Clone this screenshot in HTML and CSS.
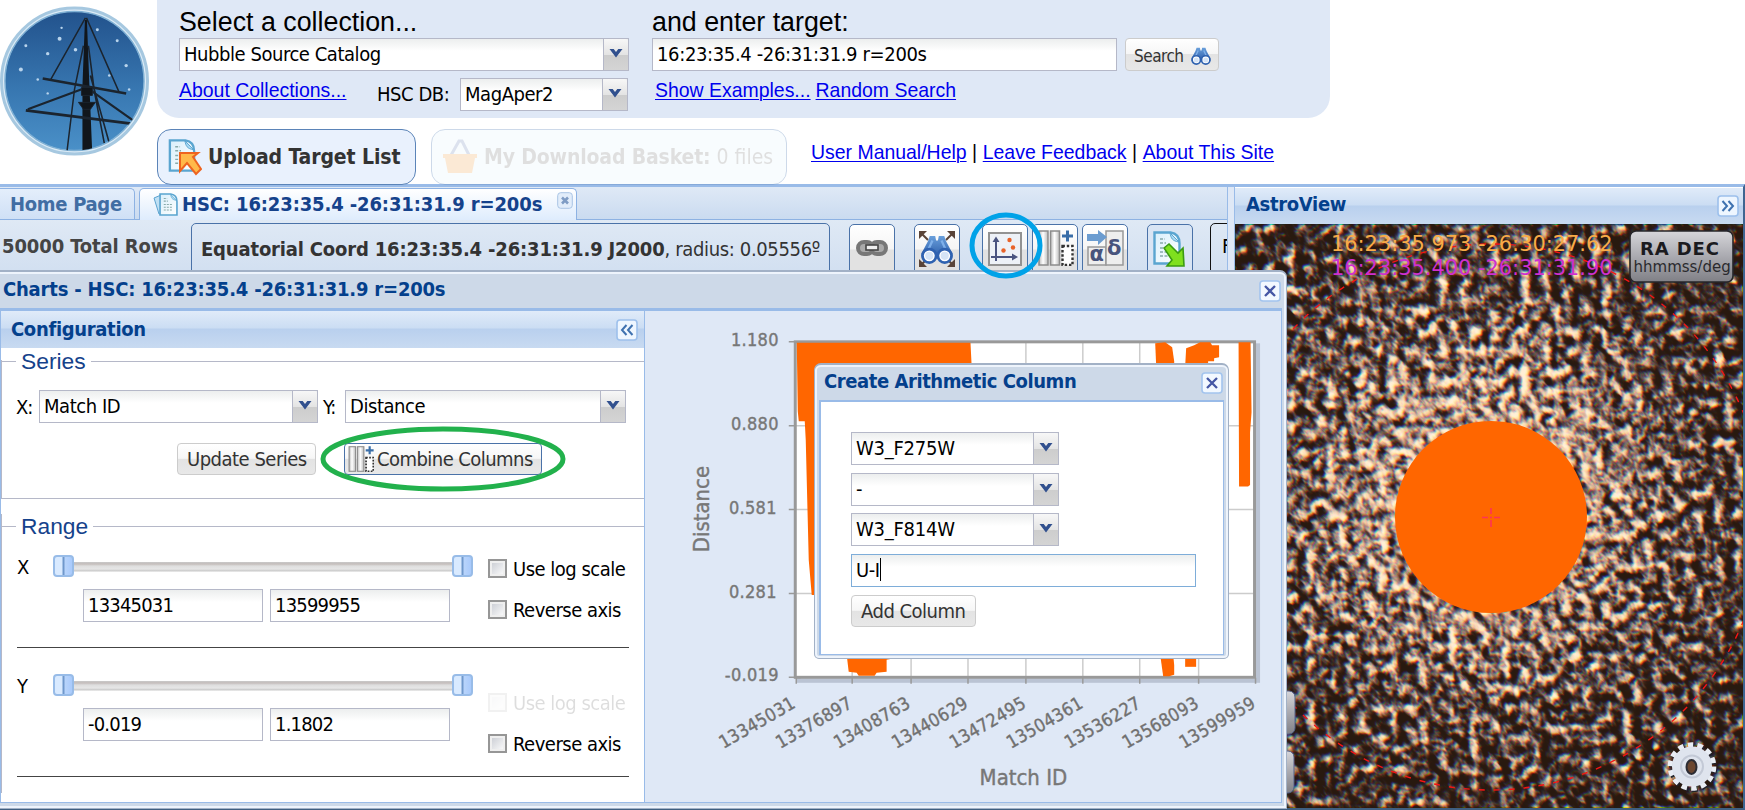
FILE: index.html
```html
<!DOCTYPE html>
<html lang="en">
<head>
<meta charset="utf-8">
<title>MAST Discovery Portal</title>
<link rel="stylesheet" href="styles.css">
</head>
<body>
<svg class="defs" width="0" height="0">
  <defs>
    <linearGradient id="steel" x1="0" y1="0" x2="1" y2="0"><stop offset="0" stop-color="#bbb"/><stop offset=".45" stop-color="#fff"/><stop offset="1" stop-color="#bbb"/></linearGradient>
    <linearGradient id="paper" x1="0" y1="0" x2="1" y2="1"><stop offset="0" stop-color="#d9effb"/><stop offset="1" stop-color="#fff"/></linearGradient>
    <linearGradient id="binoBlue" x1="0" y1="0" x2="0" y2="1"><stop offset="0" stop-color="#6aa0dc"/><stop offset="1" stop-color="#2a5ba8"/></linearGradient>
    <symbol id="chevron" viewBox="0 0 14 10"><path d="M0.5 1h4.2L7 4l2.3-3h4.2L7 9.5z" fill="#31508e"/></symbol>
    <symbol id="cross" viewBox="0 0 22 22"><rect x="1" y="1" width="20" height="20" rx="3" fill="#f2f8ff" stroke="#a3c4ee" stroke-width="1.6"/><path d="M6 6l10 10M16 6L6 16" stroke="#4456a4" stroke-width="2.3"/></symbol>
    <symbol id="fold" viewBox="0 0 22 22"><rect x="1" y="1" width="20" height="20" rx="3" fill="#eef6ff" stroke="#9dc0ec" stroke-width="1.6"/><path d="M10.5 6L6 11l4.500 5M16.500 6L12 11l4.500 5" fill="none" stroke="#3f72b0" stroke-width="2"/></symbol>
    <symbol id="columns" viewBox="0 0 36 36">
      <rect x="1.500" y="1" width="9" height="34" fill="url(#steel)" stroke="#8c8c8c" stroke-width="1.500"/>
      <rect x="13" y="1" width="9" height="34" fill="url(#steel)" stroke="#8c8c8c" stroke-width="1.500"/>
      <path d="M30 .5v11M24.500 6h11" stroke="#3a6ea8" stroke-width="3"/>
      <rect x="25" y="16" width="10" height="19" fill="#fff" stroke="#333" stroke-width="2.400" stroke-dasharray="2.400 1.900"/>
    </symbol>
    <symbol id="binoculars" viewBox="0 0 36 32">
      <path d="M10 1h6l1 5h2l1-5h6l2 6 7 13v5H1v-5L8 7z" fill="url(#binoBlue)"/>
      <path d="M13 6l-5 11M23 6l5 11" stroke="#7fb0ea" stroke-width="2.500"/>
      <circle cx="9.500" cy="23" r="7.500" fill="#fff" stroke="#2f62b0" stroke-width="3"/>
      <circle cx="26.500" cy="23" r="7.500" fill="#fff" stroke="#2f62b0" stroke-width="3"/>
      <circle cx="9.500" cy="23" r="4.500" fill="#d5e4f6"/><circle cx="26.500" cy="23" r="4.500" fill="#d5e4f6"/>
    </symbol>
    <symbol id="page" viewBox="0 0 28 34">
      <path d="M1.500 1.500h16c7 1 9 6 9 11v20h-25z" fill="url(#paper)" stroke="#5aa5d0" stroke-width="2.400"/>
      <path d="M17 2c1 5 2 8 9 9z" fill="#a9d9f2" stroke="#5aa5d0"/>
      <path d="M7 8h5M7 12h6M7 17h13M7 21h13M7 25h13" stroke="#8aa" stroke-width="1.500" stroke-dasharray="3 1.500"/>
    </symbol>
  </defs>
</svg>

<header class="masthead">
  <svg class="logo" width="149" height="150" viewBox="0 0 150 151">
    <defs>
      <linearGradient id="sky" x1="0" y1="0" x2="0" y2="1"><stop offset="0" stop-color="#22528c"/><stop offset=".55" stop-color="#3776b0"/><stop offset="1" stop-color="#4a90c8"/></linearGradient>
      <clipPath id="disc"><circle cx="75" cy="75.500" r="70"/></clipPath>
    </defs>
    <circle cx="75" cy="75.500" r="73.500" fill="#dcebf6" stroke="#a6c8e0" stroke-width="3"/>
    <circle cx="75" cy="75.500" r="70" fill="url(#sky)" stroke="#7fb0d4" stroke-width="1.500"/>
    <g fill="#b9d4ec"><circle cx="60" cy="33" r="2"/><circle cx="76" cy="44" r="1.800"/><circle cx="48" cy="48" r="1.700"/><circle cx="26" cy="40" r="1.500"/><circle cx="21" cy="64" r="2"/><circle cx="38" cy="74" r="1.300"/><circle cx="98" cy="24" r="1.500"/><circle cx="118" cy="35" r="1.500"/><circle cx="127" cy="60" r="1.700"/><circle cx="110" cy="70" r="1.300"/><circle cx="48" cy="88" r="1.200"/><circle cx="62" cy="22" r="1.200"/><circle cx="130" cy="84" r="1.300"/></g>
    <g clip-path="url(#disc)" fill="none" stroke="#1b242e">
      <path d="M83 151V80l2.500-66h2L90 80l3 71z" fill="#11161b" stroke="none"/>
      <path d="M86 12L51 74M87 12l33 75M84 40L75 84 67 150" stroke-width="1.500"/>
      <path d="M89 40l6 46 10 52M91 70l19 68" stroke-width="1.600"/>
      <path d="M43 73l84 15" stroke-width="2.600"/><path d="M26 105l110 14" stroke-width="2.800"/>
      <path d="M87 82L28 104M87 82l48 34" stroke-width="2.200"/>
      <path d="M79 97h17l-5 7h-7zM82 82h11v8H82z" fill="#11161b" stroke-width="1"/>
    </g>
  </svg>
  <div class="masthead-main">
    <div class="search-panel">
      <div class="collection">
        <div class="lead">Select a collection...</div>
        <div class="combo wide"><span>Hubble Source Catalog</span><i><svg><use href="#chevron"/></svg></i></div>
        <div class="subrow">
          <a href="#">About Collections...</a>
          <label>HSC DB:</label>
          <div class="combo db"><span>MagAper2</span><i><svg><use href="#chevron"/></svg></i></div>
        </div>
      </div>
      <div class="target">
        <div class="lead">and enter target:</div>
        <div class="target-row">
          <div class="field"><span class="coord-text">16:23:35.4 -26:31:31.9 r=200s</span></div>
          <button class="btn search">Search <svg width="20" height="18"><use href="#binoculars"/></svg></button>
        </div>
        <div class="links"><a href="#">Show Examples...</a><a href="#">Random Search</a></div>
      </div>
    </div>
    <div class="actions">
      <div class="pill">
        <svg width="34" height="38" viewBox="0 0 34 38"><use href="#page" x="0" y="1" width="28" height="33"/><path d="M12 15h18l-5 4L33 31l-5 5-9-11-7 8z" fill="#ffb94a" stroke="#ee6420" stroke-width="2"/></svg>
        <b>Upload Target List</b>
      </div>
      <div class="pill basket">
        <svg width="36" height="36" viewBox="0 0 36 36"><path d="M8 18L17 2l3 0 8 16" fill="none" stroke="#8da0c8" stroke-width="3"/><path d="M1 15h34v4h-2l-3 15H6L3 19H1z" fill="#f2b878"/></svg>
        <span><b>My Download Basket:</b> 0 files</span>
      </div>
      <nav><a href="#">User Manual/Help</a> | <a href="#">Leave Feedback</a> | <a href="#">About This Site</a></nav>
    </div>
  </div>
</header>

<main class="workspace">
  <section class="results">
    <div class="tabs">
      <div class="tab">Home Page</div>
      <div class="tab active">
        <svg width="25" height="25" viewBox="0 0 25 25"><path d="M1 6l7-3 3 18-5 1z" fill="#bfe0f4" stroke="#5ba3d0"/><use href="#page" x="6" y="1" width="19" height="23"/></svg>
        <b>HSC: 16:23:35.4 -26:31:31.9 r=200s</b>
        <svg class="tab-x" width="16" height="17" viewBox="0 0 16 17"><rect x=".7" y=".7" width="14.600" height="15.600" rx="3" fill="#e2edfa" stroke="#a9c4e4"/><path d="M5 5.500l6 6M11 5.500l-6 6" stroke="#7f9cc4" stroke-width="2.600"/></svg>
      </div>
    </div>
    <div class="toolbar">
      <b class="total">50000 Total Rows</b>
      <div class="query"><b>Equatorial Coord 16:23:35.4 -26:31:31.9 J2000</b><span>, radius: 0.05556º</span></div>
      <div class="tool t-link"><svg width="34" height="18" viewBox="0 0 34 18"><rect x="3" y="3" width="15" height="12" rx="6" fill="#aaa" stroke="#777" stroke-width="4"/><rect x="16" y="3" width="15" height="12" rx="6" fill="#aaa" stroke="#777" stroke-width="4"/><rect x="11" y="6" width="12" height="5" fill="#eee" stroke="#444" stroke-width="1.600"/></svg></div>
      <div class="tool t-bino"><svg width="38" height="38" viewBox="0 0 38 38"><path d="M2 2l8 8M36 2l-8 8M2 36l8-8M36 36l-8-8" stroke="#5a4438" stroke-width="2"/><path d="M1 1h8L1 9zM37 1h-8l8 8zM1 37h8l-8-8zM37 37h-8l8-8z" fill="#5a4438"/><use href="#binoculars" x="2" y="5" width="34" height="29"/></svg></div>
      <div class="tool t-plot"><svg width="34" height="34" viewBox="0 0 34 34"><rect x="1" y="1" width="32" height="32" fill="#edf1f7" stroke="#929292" stroke-width="2"/><path d="M8 29V7M3 25h25" stroke="#4a5480" stroke-width="2"/><path d="M4.500 10L8 4.500l3.500 5.500zM24 21.500l6 3.500-6 3.500z" fill="#4a5480"/><g fill="#e8632a"><circle cx="21.500" cy="8" r="2.200"/><circle cx="25" cy="15.500" r="2.200"/><circle cx="15.500" cy="18.500" r="2.200"/></g></svg></div>
      <div class="tool t-cols"><svg width="37" height="36"><use href="#columns"/></svg></div>
      <div class="tool t-alpha"><svg width="37" height="36" viewBox="0 0 37 36"><rect x="1" y="17" width="18" height="18" fill="#eee" stroke="#999" stroke-width="1.500"/><rect x="19" y="1" width="17" height="34" fill="#eee" stroke="#999" stroke-width="1.500"/><path d="M0 4h11V0l9 7-9 8v-4H0z" fill="#6b9cd0"/><text class="greek" x="2.500" y="31">α</text><text class="greek" x="20" y="25">δ</text></svg></div>
      <div class="tool t-export"><svg width="34" height="38" viewBox="0 0 34 38"><use href="#page" x="0" y="1" width="28" height="34"/><path d="M11 18l5-4 9 9 5-5 1 18H14l5-6z" fill="#7fe01e" stroke="#3a9a12" stroke-width="1.600"/></svg></div>
      <div class="filter">F</div>
    </div>
  </section>
  <div class="splitter"></div>
  <aside class="astroview">
    <div class="panel-head"><b>AstroView</b><svg class="flip" width="22" height="22"><use href="#fold"/></svg></div>
    <svg class="sky" width="508" height="584" viewBox="1235 224 508 584">
      <defs>
        <radialGradient id="cluster" gradientUnits="userSpaceOnUse" cx="1480" cy="500" r="340"><stop offset="0" stop-color="#fff"/><stop offset=".3" stop-color="#e2e2e2"/><stop offset=".6" stop-color="#7a7a7a"/><stop offset="1" stop-color="#2c2c2c"/></radialGradient>
        <filter id="stars" filterUnits="userSpaceOnUse" x="1235" y="224" width="508" height="584" color-interpolation-filters="sRGB">
          <feTurbulence type="fractalNoise" baseFrequency="0.098" numOctaves="3" seed="23"/>
          <feColorMatrix values=".65 .5 0 0 -.07  .65 .5 0 0 -.07  .65 .5 0 0 -.07  0 0 0 0 1" result="n0"/>
          <feGaussianBlur in="n0" stdDeviation=".7" result="n"/>
          <feComposite in="n" in2="SourceGraphic" operator="arithmetic" k1="0" k2="2.050" k3="0.480" k4="-0.920" result="v"/>
          <feColorMatrix in="v" values="1 0 0 0 0  0 0 0 0 0  0 0 0 0 0  0 0 0 1 0" result="r0"/>
          <feOffset in="r0" dx="0.700" dy="0.700" result="r"/>
          <feColorMatrix in="v" values="0 0 0 0 0  0 1 0 0 0  0 0 0 0 0  0 0 0 1 0" result="g"/>
          <feColorMatrix in="v" values="0 0 0 0 0  0 0 0 0 0  0 0 1 0 0  0 0 0 1 0" result="b0"/>
          <feOffset in="b0" dx="-1" dy="-1" result="b"/>
          <feBlend in="r" in2="g" mode="screen" result="rg"/>
          <feBlend in="rg" in2="b" mode="screen"/>
          <feComponentTransfer>
            <feFuncR type="table" tableValues=".16 .17 .25 .42 .64 .85 .97 1 1"/>
            <feFuncG type="table" tableValues=".1 .11 .18 .33 .52 .7 .83 .9 .94"/>
            <feFuncB type="table" tableValues=".06 .08 .16 .31 .48 .6 .7 .78 .84"/>
          </feComponentTransfer>
        </filter>
      </defs>
      <rect x="1235" y="224" width="508" height="584" fill="url(#cluster)" filter="url(#stars)"/>
      <circle cx="1491" cy="517" r="273" fill="none" stroke="#f41414" stroke-width="1.400" stroke-dasharray="6 9"/>
      <circle cx="1491" cy="517" r="96" fill="#ff6600"/>
      <path d="M1482 517.500h6M1490 517.500h2M1494 517.500h6M1491 508v6M1491 520v7" stroke="#ff3355" stroke-width="1.600"/>
      <text class="pos" x="1331" y="251" fill="#f8ab48">16:23:35.973 -26:30:27.62</text>
      <text class="pos" x="1331" y="275" fill="#cf30cf">16:23:35.400 -26:31:31.90</text>
      <linearGradient id="metal" x1="0" y1="0" x2="0" y2="1"><stop offset="0" stop-color="#d6d6da"/><stop offset=".5" stop-color="#aaaab0"/><stop offset="1" stop-color="#808086"/></linearGradient>
      <rect x="1630" y="231" width="103" height="51" rx="6" fill="url(#metal)" stroke="#26262a" stroke-width="1.600"/>
      <text class="radec" x="1640" y="255">RA DEC</text>
      <text class="unit" x="1633.500" y="272">hhmmss/deg</text>
      <rect x="1270" y="691" width="25" height="43" rx="6" fill="url(#metal)" stroke="#53618a"/>
      <rect x="1270" y="751" width="24" height="42" rx="6" fill="url(#metal)" stroke="#53618a"/>
      <circle cx="1693" cy="768" r="21" fill="none" stroke="#23232b" stroke-width="6" stroke-dasharray="5.200 4.220"/>
      <circle cx="1692" cy="766.500" r="21.800" fill="none" stroke="#e9edf4" stroke-width="5" stroke-dasharray="5.500 4.280"/>
      <circle cx="1692" cy="766.500" r="12.500" fill="none" stroke="#dfe4ee" stroke-width="15"/>
      <circle cx="1692" cy="766.500" r="11" fill="none" stroke="#c3c9d6" stroke-width="2"/>
      <ellipse cx="1691.500" cy="767" rx="5" ry="7" fill="#6b4630" stroke="#2c2c34" stroke-width="2"/>
    </svg>
  </aside>
</main>

<section class="window charts">
  <div class="window-head"><b>Charts - HSC: 16:23:35.4 -26:31:31.9 r=200s</b><svg width="22" height="22"><use href="#cross"/></svg></div>
  <div class="window-body">
    <div class="config">
      <div class="panel-head"><b>Configuration</b><svg width="22" height="22"><use href="#fold"/></svg></div>
      <div class="group series">
        <div class="legend"><span>Series</span></div>
        <div class="axes">
          <label>X:</label><div class="combo sx"><span>Match ID</span><i><svg><use href="#chevron"/></svg></i></div>
          <label>Y:</label><div class="combo sy"><span>Distance</span><i><svg><use href="#chevron"/></svg></i></div>
        </div>
        <div class="series-buttons">
          <button class="btn update">Update Series</button>
          <button class="btn combine"><svg width="26" height="26"><use href="#columns"/></svg>Combine Columns</button>
        </div>
      </div>
      <div class="group range">
        <div class="legend"><span>Range</span></div>
        <div class="axis-range">
          <span class="axis-name">X</span>
          <div class="controls">
            <div class="slider"><i></i><i></i></div>
            <div class="bounds"><div class="field digits">13345031</div><div class="field digits">13599955</div></div>
          </div>
          <div class="checks"><label><i></i>Use log scale</label><label><i></i>Reverse axis</label></div>
        </div>
        <div class="axis-range second">
          <span class="axis-name">Y</span>
          <div class="controls">
            <div class="slider"><i></i><i></i></div>
            <div class="bounds"><div class="field digits">-0.019</div><div class="field digits">1.1802</div></div>
          </div>
          <div class="checks"><label class="off"><i></i>Use log scale</label><label><i></i>Reverse axis</label></div>
        </div>
      </div>
    </div>
    <svg class="plot" width="637" height="491" viewBox="644 311 637 491">
      <rect x="798" y="345" width="460" height="336" fill="none" stroke="#8d97a8" stroke-opacity=".45" stroke-width="4"/>
      <rect x="794.500" y="341.500" width="460" height="336" fill="#fff"/>
      <path d="M795 425.500h460M795 509.500h460M795 593.500h460M851.500 342v336M910.500 342v336M967.500 342v336M1025.500 342v336M1082.500 342v336M1139.500 342v336M1198.500 342v336" stroke="#ccc" stroke-width="1.500"/>
      <path d="M788 341.500h7M788 425.500h7M788 509.500h7M788 593.500h7M788 677.500h7M795.500 678v6M851.500 678v6M910.500 678v6M967.500 678v6M1025.500 678v6M1082.500 678v6M1139.500 678v6M1198.500 678v6M1255.500 678v6" stroke="#999" stroke-width="1.500"/>
      <rect x="794.500" y="341.500" width="460" height="336" fill="none" stroke="#999" stroke-width="3"/>
      <g fill="#ff6600">
        <path d="M796 342.500h174l1 20v10H825V590l-7 5h-7l-3-35-3-120-1-19h-6l-1-10z"/>
        <path d="M846 655l2 17 8 1 2 3h16l2-3 10-1v-12l5-1v-5z"/>
        <path d="M1155 343l10-1 7 5 2 14v5h-18z"/>
        <path d="M1185 366l1-18 8-3 6-3h10l2 3h7v12l-5 1v3h-6v6z"/>
        <path d="M1238.500 342h12l1 70-1.500 20v53l-2 1.500h-9z"/>
        <path d="M1160 655h13l1 10v10l-5 1.500h-6z"/><path d="M1185 655h11v12h-11z"/>
      </g>
      <g class="tick-y"><text x="778" y="346">1.180</text><text x="778" y="430">0.880</text><text x="776" y="514">0.581</text><text x="776" y="598">0.281</text><text x="778" y="681">-0.019</text></g>
      <g class="tick-x">
        <text transform="translate(796 707) rotate(-30)">13345031</text><text transform="translate(853 707) rotate(-30)">13376897</text><text transform="translate(911 707) rotate(-30)">13408763</text><text transform="translate(969 707) rotate(-30)">13440629</text><text transform="translate(1027 707) rotate(-30)">13472495</text><text transform="translate(1084 707) rotate(-30)">13504361</text><text transform="translate(1142 707) rotate(-30)">13536227</text><text transform="translate(1200 707) rotate(-30)">13568093</text><text transform="translate(1257 707) rotate(-30)">13599959</text>
      </g>
      <text class="axis-title" x="1023" y="785">Match ID</text>
      <text class="axis-title" transform="translate(708 509) rotate(-90)">Distance</text>
    </svg>
  </div>
</section>

<section class="window arithmetic">
  <div class="window-head"><b>Create Arithmetic Column</b><svg width="22" height="22"><use href="#cross"/></svg></div>
  <div class="form">
    <div class="combo"><span>W3_F275W</span><i><svg><use href="#chevron"/></svg></i></div>
    <div class="combo"><span>-</span><i><svg><use href="#chevron"/></svg></i></div>
    <div class="combo"><span>W3_F814W</span><i><svg><use href="#chevron"/></svg></i></div>
    <div class="field focus">U-I<em></em></div>
    <button class="btn">Add Column</button>
  </div>
</section>

<svg class="marks" width="1745" height="810">
  <ellipse cx="1006" cy="245.500" rx="34" ry="30.500" fill="none" stroke="#00a2e8" stroke-width="5"/>
  <ellipse cx="443" cy="459" rx="120" ry="30" fill="none" stroke="#22b14c" stroke-width="5"/>
</svg>
</body>
</html>
```
FILE: styles.css
```css
* { box-sizing: border-box; }
body { margin: 0; width: 1745px; height: 810px; overflow: hidden; position: relative; background: #fff; color: #000;
  font: 20px/24px "DejaVu Sans Condensed", "DejaVu Sans", sans-serif; letter-spacing: -.45px; }
b { letter-spacing: -.2px; }
svg { display: block; flex: none; }
.defs { position: absolute; }
a { color: #0000ee; font-family: "Liberation Sans", Arial, sans-serif; text-underline-offset: 2px; text-decoration-thickness: 1px; font-size: 19.45px; letter-spacing: 0; }
button { font: inherit; letter-spacing: inherit; }

/* Masthead */
.masthead { display: flex; height: 184px; }
.logo { margin: 6px 8px 0 0; }
.masthead-main { flex: 1; }
.search-panel { display: flex; width: 1173px; height: 118px; background: #dfe8f6; border-radius: 0 0 22px 22px; padding-left: 22px; }
.collection { width: 473px; }
.lead { font: 26.800px/38px "Liberation Sans", Arial, sans-serif; letter-spacing: 0; height: 38px; padding-top: 3px; white-space: nowrap; }
.combo, .field { height: 33px; border: 1px solid #b5b8c8; background: linear-gradient(#eceeee, #fff 12px); display: flex; align-items: center; white-space: nowrap; }
.combo { justify-content: space-between; }
.combo span, .field { padding-left: 4px; padding-bottom: 2px; }
.field span { padding: 0; }
.combo { padding-bottom: 0; }
.combo i { width: 25px; height: 31px; background: linear-gradient(#f7f7f7, #e4e4e4 50%, #cdcdcd 51%, #d4d4d4); border-left: 1px solid #b5b8c8; border-radius: 0 3px 0 0; display: flex; align-items: center; justify-content: center; padding: 0 1px 3px 0; }
.combo i svg { width: 14px; height: 10px; }
.wide { width: 450px; }
.subrow { display: flex; padding-top: 7px; width: 450px; }
.subrow a { width: 198px; line-height: 24px; }
.subrow label { width: 83px; line-height: 33px; }
.db { width: 168px; }
.coord-text { letter-spacing: -.36px; }
.target-row { display: flex; gap: 8px; }
.target-row .field { width: 465px; }
.btn { height: 32px; border: 1px solid #ccc; border-radius: 4px; background: linear-gradient(#fff, #f6f6f6 48%, #e3e3e3 50%, #e8e8e8); color: #333; padding: 0 10px 2px; display: flex; align-items: center; white-space: nowrap; }
.search { width: 94px; height: 33px; font-size: 17px; padding: 2px 7px 0 8px; justify-content: space-between; letter-spacing: -.5px; }
.links { display: flex; gap: 5px; padding: 7px 0 0 3px; line-height: 24px; }
.actions { display: flex; padding-top: 11px; }
.pill { width: 259px; height: 56px; border: 1px solid #5b84b8; border-radius: 14px; background: #e9f1fd; color: #333; display: flex; align-items: center; font-size: 21px; padding-left: 10px; gap: 6px; white-space: nowrap; }
.pill b { letter-spacing: -.1px; }
.basket { width: 356px; margin-left: 15px; background: #e9f6fd; color: #999; opacity: .3; }
.basket b { letter-spacing: -.15px; }
.basket span { letter-spacing: 0; }
.actions nav { padding: 10px 0 0 24px; line-height: 26px; font-family: "Liberation Sans", Arial, sans-serif; font-size: 19.450px; letter-spacing: .1px; white-space: nowrap; }

/* Workspace */
.workspace { display: flex; height: 626px; border-top: 3px solid #99bbe8; border-bottom: 2px solid #3f5f80; background: #dfe8f6; border-right: 2px solid #3f6591; }
.results { width: 1228px; overflow: hidden; border-right: 1px solid #99bbe8; flex: none; }
.tabs { height: 33px; display: flex; background: linear-gradient(#dfe9f6, #cadbf0); border-bottom: 1px solid #8db2e3; gap: 4px; padding-top: 1px; }
.tab { width: 135px; height: 31px; border: 1px solid #8db2e3; border-left: 0; border-radius: 0 5px 0 0; border-bottom: 0; background: linear-gradient(#e4eefb, #cfe0f6); color: #416da3; font-weight: bold; padding: 3px 0 0 10px; white-space: nowrap; letter-spacing: -.3px; }
.active { width: 438px; height: 32px; border-left: 1px solid #8db2e3; border-radius: 5px 5px 0 0; background: linear-gradient(#fff, #deecfd); color: #15428b; display: flex; padding: 3px 3px 0 13px; gap: 4px; }
.active b { flex: 1; letter-spacing: -.13px; }
.toolbar { display: flex; height: 60px; padding-top: 3px; background: linear-gradient(#dfe9f5, #d0def0); white-space: nowrap; color: #333; }
.toolbar > * { flex: none; }
.total { width: 191px; padding: 11px 0 0 2px; color: #444; letter-spacing: -.1px; }
.query { width: 639px; height: 60px; border: 1px solid #4a72a8; border-radius: 5px; padding: 13px 0 0 9px; }
.query span { letter-spacing: -.35px; }
.query b { letter-spacing: -.17px; }
.tool { width: 46px; height: 56px; margin-top: 1px; border: 1px solid #4a72a8; border-radius: 5px; background: linear-gradient(#fff, #f5f5f5 24px, #e2e2e2 25px); display: flex; justify-content: center; padding-top: 5px; }
.t-link { margin-left: 19px; padding-top: 14px; }
.t-bino { margin-left: 19px; }
.t-plot { margin-left: 22px; padding-top: 7px; }
.t-cols, .t-alpha { margin-left: 4px; }
.t-export { margin-left: 19px; background: #d9e5f4; }
.greek { font: bold 21px "DejaVu Sans", sans-serif; fill: #48547c; }
.filter { width: 90px; height: 60px; margin-left: 17px; border: 1px solid #111; border-radius: 5px; padding: 10px 0 0 11px; color: #000; }
.splitter { width: 7px; border-right: 1px solid #99bbe8; flex: none; }
.astroview { width: 508px; }
.panel-head { height: 37px; background: linear-gradient(#e0ebf9, #cbddf3 17px, #b9d0ee 18px, #c8daf1); display: flex; justify-content: space-between; color: #04408c; padding: 6px 4px 0 10px; }
.panel-head b { letter-spacing: -.33px; line-height: 20px; }
.panel-head svg { margin-top: 1px; }
.flip { transform: scaleX(-1); }
.astroview .panel-head { border-top: 1px solid #fff; padding-left: 11px; }
.pos { font: 20.900px "DejaVu Sans", sans-serif; letter-spacing: 0; }
.radec { font: bold 18px "DejaVu Sans", sans-serif; letter-spacing: .9px; fill: #1b1b1f; }
.unit { font: 15px "DejaVu Sans", sans-serif; letter-spacing: 0; fill: #2a2a2e; }

/* Floating windows */
.window { position: absolute; background: #cdd9e8; border: 1px solid #a2b1c6; box-shadow: inset 0 0 0 2px #eef4fc; }
.window-head { display: flex; justify-content: space-between; color: #04408c; }
.charts { left: -3px; top: 270px; width: 1290px; height: 539px; border-top-width: 2px; border-radius: 0 7px 0 0; padding: 0 4px 0 1px; }
.charts .window-head { height: 36px; padding: 8px 1px 0 4px; }
.charts .window-head b { line-height: 18px; }
.window-body { display: flex; border: 1px solid #99bbe8; border-top-width: 3px; height: 495px; background: #dfe8f6; }
.config { width: 645px; background: #fff; border-right: 1px solid #99bbe8; border-left: 1px solid #99bbe8; flex: none; }
.config .panel-head { padding-right: 6px; padding-top: 7px; }
.config .panel-head b { line-height: 22px; }
.plot { flex: 1; }
.group { border: solid #b5b8c8; border-width: 0 0 0 1px; }
.series { height: 151px; margin-bottom: 15px; border-image: linear-gradient(transparent 13px, #b5b8c8 13px) 1; border-width: 0 0 1px 1px; padding-top: 1px; }
.legend { display: flex; align-items: center; height: 24px; color: #15428b; font: 22.800px/24px "Liberation Sans", Arial, sans-serif; letter-spacing: 0; }
.legend::before { content: ""; width: 14px; height: 1px; background: #b5b8c8; }
.legend::after { content: ""; flex: 1; height: 1px; background: #b5b8c8; }
.legend span { padding: 0 5px; }
.axes { display: flex; padding: 17px 0 0 14px; }
.axes label { width: 23px; line-height: 35px; letter-spacing: -1px; white-space: nowrap; }
.axes .sx { width: 279px; margin-right: 5px; }
.axes .sx + label { width: 22px; }
.sy { width: 281px; }
.series-buttons { display: flex; gap: 28px; padding: 18px 0 0 175px; }
.update { width: 139px; padding: 0 9px 1px; letter-spacing: -.5px; }
.combine { width: 198px; padding: 0 3px 1px; border-color: #4a72a8; gap: 3px; letter-spacing: -.55px; }
.range { height: 279px; }
.axis-range { display: flex; width: 612px; margin-left: 15px; height: 110px; border-bottom: 1px solid #444; padding-top: 17px; }
.second { height: 129px; padding-top: 26px; }
.axis-name { width: 36px; line-height: 24px; }
.controls { width: 435px; }
.slider { width: 420px; height: 22px; display: flex; justify-content: space-between; background: linear-gradient(transparent 7px, #c9c9c9 7px, #c4bdbb 9px, #dedede 11px, #e6e6e6 14px, #c8c8c8 16px, transparent 17px); }
.slider i { width: 21px; height: 22px; border: 2px solid #98bce8; border-radius: 4px; background: linear-gradient(90deg, #d9eaff 7px, #6f98cc 8px, #6f98cc 9px, #b8d4fb 10px, #a9cafc); }
.bounds { display: flex; gap: 7px; padding: 12px 0 0 30px; }
.bounds .field { width: 180px; }
.digits { letter-spacing: -.8px; }
.checks label { display: flex; height: 41px; gap: 6px; padding-top: 4px; line-height: 20px; white-space: nowrap; letter-spacing: -.5px; }
.checks i { width: 19px; height: 19px; border: 2px solid #969696; background: linear-gradient(135deg, #c6c9d0, #fff); box-shadow: inset 0 0 0 2px #efefef; }
.second .checks label { padding-top: 19px; height: 60px; }
.second .checks label + label { padding-top: 0; }
.checks .off { opacity: .13; }

.tick-y { font-size: 18px; fill: #777; text-anchor: end; letter-spacing: .3px; }
.tick-x { font-size: 18px; fill: #6f6f6f; text-anchor: end; letter-spacing: .3px; }
.tick-y text, .tick-x text, .axis-title { stroke: #777; stroke-width: .4px; }
.axis-title { font-size: 22px; fill: #777; text-anchor: middle; letter-spacing: 0; }

.arithmetic { left: 814px; top: 363px; width: 415px; height: 296px; border-radius: 7px 7px 5px 5px; border-top-width: 2px; padding: 0 4px; }
.arithmetic .window-head { height: 35px; padding: 8px 1px 0 5px; }
.arithmetic .window-head b { letter-spacing: -.43px; line-height: 17px; }
.arithmetic .window-head svg { margin-top: -1px; }
.form { height: 255px; border: 2px solid #99bbe8; border-width: 2px 1px 1px 2px; background: #fff; padding: 30px 0 0 30px; }
.form .combo { width: 208px; margin-bottom: 8px; letter-spacing: -.25px; }
.form .combo:nth-child(2) { margin-bottom: 7px; }
.focus { width: 345px; border-color: #7eadd9; }
.focus em { width: 1px; height: 23px; background: #000; }
.form .btn { width: 125px; margin-top: 8px; padding: 0 9px 1px; letter-spacing: -.5px; }

.marks { position: absolute; left: 0; top: 0; pointer-events: none; }
```
